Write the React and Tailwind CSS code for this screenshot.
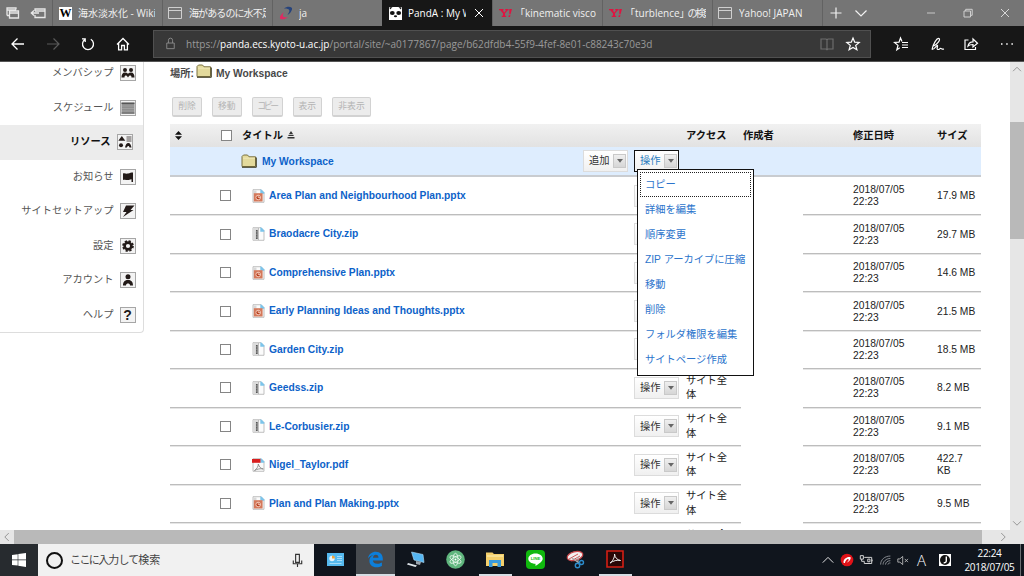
import React from "react";

const FILES = [
  ["Area Plan and Neighbourhood Plan.pptx", "pptx", "17.9 MB"],
  ["Braodacre City.zip", "zip", "29.7 MB"],
  ["Comprehensive Plan.pptx", "pptx", "14.6 MB"],
  ["Early Planning Ideas and Thoughts.pptx", "pptx", "21.5 MB"],
  ["Garden City.zip", "zip", "18.5 MB"],
  ["Geedss.zip", "zip", "8.2 MB"],
  ["Le-Corbusier.zip", "zip", "9.1 MB"],
  ["Nigel_Taylor.pdf", "pdf", "422.7 KB"],
  ["Plan and Plan Making.pptx", "pptx", "9.5 MB"],
  ["", "", ""],
];

const MENU = ["コピー", "詳細を編集", "順序変更", "ZIP アーカイブに圧縮", "移動", "削除", "フォルダ権限を編集", "サイトページ作成"];

const GRID = "grid grid-cols-[50px_22px_392.5px_51.5px_55px_61.5px_50.5px_84px_44px]";

function Line({ d, className = "", w = 1, size = 16 }) {
  return (
    <svg viewBox="0 0 16 16" width={size} height={size} className={`shrink-0 ${className}`} fill="none" stroke="currentColor" strokeWidth={w}>
      <path d={d} />
    </svg>
  );
}

function WindowIcon() {
  return <Line d="M1.500 2.500h13v11h-13zM1.500 5.500h13" className="text-[#cfcfcf]" />;
}

function Yahoo() {
  return (
    <svg width="14" height="12" viewBox="0 0 14 12" className="mr-[1px] ml-[1px] shrink-0" fill="#e01440">
      <path d="M1 2h4.500v1.200h-.8l1.600 2.300 1.800-2.300h-.9V2H10.500v1.200h-.8L7 6.400v2.400h1.200V10H3.800V8.800H5V6.400L2.300 3.200H1z" />
      <path d="M11.300 2H14l-1.500 5.200h-1.200zM10.800 8.300h1.700L12 10h-1.700z" />
    </svg>
  );
}

function Tab({ icon, label, active }) {
  return (
    <div className={`flex w-[110px] shrink-0 items-center pl-1 ${active ? "bg-[#171717] text-white" : "border-l border-[#626262] text-[#f0f0f0]"}`}>
      {icon}
      <span className={`ml-1.5 overflow-hidden leading-[20px] whitespace-nowrap ${active ? "w-[58px]" : "w-[77px]"}`}>{label}</span>
      {active && <Line d="M4 4l8 8M12 4l-8 8" className="ml-[5px]" size={16} />}
    </div>
  );
}

function TabBar() {
  return (
    <div className="flex h-[26px] bg-[#757575] font-['Open_Sans','Noto_Sans_CJK_JP',sans-serif] text-[10px] leading-none">
      <div className="flex w-[52px] items-center gap-[9px] pl-[5px] text-[#e8e8e8]">
        <Line d="M2 10.500V3h9v1.500M2 5h9M4.500 13V6h9v7zM4.500 8h9M2 10.500h2" w={1.3} />
        <Line d="M5 6V4h10v8.500H5V10M5 6h10M1 8h8M4 5.500L1.300 8 4 10.500" w={1.3} />
      </div>
      <Tab
        icon={<span className="ml-[2px] flex h-[13px] w-[13px] shrink-0 items-center justify-center bg-white font-['Liberation_Serif',serif] text-[12px] font-bold text-black">W</span>}
        label="海水淡水化 - Wiki"
      />
      <Tab icon={<WindowIcon />} label={<span className="tracking-[-0.9px]">海があるのに水不足</span>} />
      <Tab
        icon={
          <svg width="16" height="16" viewBox="0 0 16 16" fill="none" className="-mr-[1px] ml-[1px] shrink-0">
            <path d="M6 3.500C9 .8 15 1.200 14 4.500c-.5 2-2.500 4.500-4.500 5.500 2.500-4 3.500-6.500-3.500-6.500z" fill="#26437c" />
            <path d="M10 12.300c-3 2.500-9 3-8-.3.500-2 2.500-4 4-5C4 10 4 13 10 12.300z" fill="#e02a62" />
          </svg>
        }
        label="ja"
      />
      <Tab
        active
        icon={
          <svg width="13" height="13" viewBox="0 0 13 13" className="ml-[3px] shrink-0">
            <path d="M0 0h13v13H0z" fill="#fff" />
            <path d="M.5.300h3L1 2.500zM9.500.300h3L12 2.500z" fill="#111" />
            <ellipse cx="3.300" cy="6" rx="2.400" ry="2.100" fill="#111" />
            <ellipse cx="9.700" cy="6" rx="2.400" ry="2.100" fill="#111" />
            <ellipse cx="6.500" cy="9.300" rx="1.600" ry="1" fill="#111" />
          </svg>
        }
        label="PandA : My Workspace"
      />
      <Tab icon={<Yahoo />} label={<span className="-ml-[4px]">「kinematic viscosity</span>} />
      <Tab icon={<Yahoo />} label={<span className="-ml-[4px]">「turblence<span className="tracking-[-2px]">」の検索</span></span>} />
      <Tab icon={<WindowIcon />} label="Yahoo! JAPAN" />
      <div className="flex flex-1 items-center border-l border-[#626262] text-[#f2f2f2]">
        <Line d="M2.500 8h11M8 2.500v11" className="ml-[5px]" w={1.2} />
        <Line d="M2.500 5.500L8 11l5.500-5.500" className="ml-[9px]" w={1.2} />
        <Line d="M4 8h8" className="ml-[54px] text-[#c8c8c8]" />
        <Line d="M4 6h6.500v6H4zM5.700 6V4.300h6.500v6h-1.700" className="ml-[21px] text-[#d0d0d0]" />
        <Line d="M4 4l8 8M12 4l-8 8" className="ml-[21px] text-[#d8d8d8]" />
      </div>
    </div>
  );
}

function AddressBar() {
  return (
    <div className="flex h-9 items-center border-b border-[#555] bg-[#171717] font-['Open_Sans',sans-serif] text-white">
      <Line d="M2 8h12M7.500 2.500L2 8l5.500 5.500" className="ml-[10px]" w={1.3} />
      <Line d="M2 8h12M8.500 2.500L14 8l-5.500 5.500" className="ml-[19px] text-[#5a5a5a]" w={1.2} />
      <Line d="M5.200 3.300a5.500 5.500 0 1 0 5.600 0M5.200 6V2.800H2" className="ml-[19px]" w={1.3} />
      <Line d="M2 8.500L8 2.500l6 6M3.600 7v6.800h3V9.500h2.800v4.300h3V7" className="ml-[19px]" w={1.3} />
      <div className="ml-[22px] flex h-7 w-[718px] items-center border border-[#505050] bg-[#383838]">
        <Line d="M4 7.500h8v6H4zM5.800 7.500V4.500a2.200 2.200 0 0 1 4.400 0v3" className="ml-[9px] text-[#8a8a8a]" size={15} />
        <span className="ml-[8px] w-[628px] text-[10px] leading-none whitespace-nowrap text-[#9a9a9a]">
          https://<span className="text-white">panda.ecs.kyoto-u.ac.jp</span>/portal/site/~a0177867/page/b62dfdb4-55f9-4fef-8e01-c88243c70e3d
        </span>
        <Line d="M2 3h5l1 .8L9 3h5v10H9l-1 .8L7 13H2zM8 4v9.500" className="ml-[5px] text-[#6c6c6c]" w={1.2} />
        <Line d="M8 2l1.700 4.200 4.500.3-3.500 2.900 1.200 4.400L8 11.400l-3.900 2.400 1.200-4.400L1.800 6.500l4.500-.3z" className="ml-[10px]" w={1.2} />
      </div>
      <Line d="M9 5.500L7.500 2 6 6.200l-4.500.3L5 9.400l-1.200 4.400 3-2M9 6.500h6M9 9h6M9 11.500h6" className="ml-[22px]" w={1.2} />
      <Line d="M3 13.500C4 8 8 1.500 10 2.500s-2 6-5.500 7.500M3 13.500c2 .5 5-5 5.500-4s-1.500 4 .5 4 1.500-1.500 3-1 1 1 3 .5" className="ml-[20px]" w={1.2} />
      <Line d="M5.500 4H2v9.500h10.500V11M5 10c.5-3 2.500-4.200 5-4.200V3l4.500 4.200L10 11V8.500c-2 0-3.500 0-5 1.500z" className="ml-[18px]" w={1.2} />
      <Line d="M2 8h1.500M7.200 8h1.500M12.400 8h1.500" className="ml-[20px]" w={1.5} />
    </div>
  );
}

const GLYPHS = {
  people: (
    <g>
      <circle cx="5" cy="5.500" r="2" />
      <circle cx="11" cy="5.500" r="2" />
      <path d="M1.500 13c0-3 1-5 3.500-5s3 1.500 3 1.500S8.500 8 11 8s3.500 2 3.500 5h-3c0-2-1-2-1.500-2s-1 .5-2 2c-1-1.500-1.500-2-2-2s-1.500 0-1.500 2z" />
    </g>
  ),
  calendar: (
    <g>
      <path d="M1.500 3.500h13v10.500h-13z" fill="#8e8e8e" />
      <path d="M1.500 3h13v1.300h-13zM1.500 13.200h13v.8h-13z" fill="#444" />
      <path d="M2 6.500h12M2 9h12M2 11.500h12" stroke="#aeaeae" strokeWidth=".6" />
    </g>
  ),
  resources: (
    <g>
      <path d="M4.800 2.500l3.500 4.700h-7z" />
      <circle cx="4" cy="11.800" r="2" />
      <path d="M9.500 3h5v1h-5zM9.500 5h5v1h-5zM9.500 7h5v1h-5z" opacity=".75" />
      <path d="M8 14c.5-2.500 1.500-4.500 3.300-4.500S14 11.500 14.500 14h-2c-.3-1-.6-1.500-1.200-1.500S10.300 13 10 14z" />
    </g>
  ),
  flag: <path d="M3 5c2-.5 3 .5 5 0s3-1 5-1v9.500h-1.500V10.800c-2 0-2 .8-4 .8S5 11 3 11.500z" />,
  bolt: <path d="M6 3h8.500L10.500 7.500h3L3 14.500 6.500 9.500H3z" />,
  gear: (
    <g>
      <circle cx="8" cy="8.500" r="3.400" fill="none" stroke="#221a18" strokeWidth="2.600" />
      <circle cx="8" cy="8.500" r="5" fill="none" stroke="#221a18" strokeWidth="1.700" strokeDasharray="2.300 1.627" />
    </g>
  ),
  person: (
    <g>
      <circle cx="8" cy="5.300" r="2.500" />
      <path d="M3 14c0-3 1-5.500 5-5.500s5 2.500 5 5.500h-3c0-1.500-1-2-2-2s-2 .5-2 2z" />
    </g>
  ),
};

function SideIcon({ name }) {
  return (
    <span className="flex h-4 w-4 shrink-0 items-center justify-center border border-[#a6a6a6] bg-[#f3f3f3] text-[#221a18]">
      {name === "help" ? (
        <b className="font-['Liberation_Sans',sans-serif] text-[14px] leading-none">?</b>
      ) : (
        <svg viewBox="1 1.500 14 14" width="14" height="14" fill="#221a18">{GLYPHS[name]}</svg>
      )}
    </span>
  );
}

function Sidebar() {
  const items = [
    ["メンバシップ", "people"],
    ["スケジュール", "calendar"],
    ["リソース", "resources"],
    ["お知らせ", "flag"],
    ["サイトセットアップ", "bolt"],
    ["設定", "gear"],
    ["アカウント", "person"],
    ["ヘルプ", "help"],
  ];
  return (
    <div className="h-[271px] w-36 shrink-0 overflow-hidden rounded-br border-r border-b border-[#ddd] bg-white">
      <div className="-mt-[6px]">
        {items.map(([t, i], k) => (
          <div
            key={t}
            className={`flex h-[34.5px] items-center justify-end gap-[6px] text-[10.25px] ${k === 2 ? "bg-[#ececec] pr-[10.500px] font-bold text-[#111]" : "pr-[7.500px] text-[#555]"}`}
          >
            <span className="-mt-[1px]">{t}</span>
            <SideIcon name={i} />
          </div>
        ))}
      </div>
    </div>
  );
}

function Folder() {
  return (
    <svg viewBox="0 0 16 14" width="16" height="14" className="shrink-0">
      <path d="M1 12.500V2.500L2.500 1h4L8 2.800h6.500V12.500z" fill="#e3da9c" stroke="#7a7140" strokeWidth="1" />
      <path d="M1 13.300h14.300V3.500" fill="none" stroke="#3e3b22" strokeWidth="1" />
      <path d="M2 4.200h12" stroke="#f3ecc0" strokeWidth=".8" />
    </svg>
  );
}

function FileIcon({ type }) {
  return (
    <svg viewBox="0 0 13 14" width="13" height="14" className="shrink-0">
      <path d="M1 .7h8l3 3v9.600H1z" fill="#fbfbfb" stroke="#b0b0b0" strokeWidth=".8" />
      <path d="M8.300.5h1.200L12.300 3.500v1.300h-4z" fill="#7cc4ea" />
      {type === "pptx" && (
        <g>
          <path d="M1.500 1.500h3v3h-3z" fill="#d8d8d8" />
          <path d="M1.800 4.200h8.800v8.300H1.800z" fill="#d4785a" />
          <circle cx="6.200" cy="8.500" r="2.300" fill="#b8401f" stroke="#f6d3c4" strokeWidth=".9" />
          <path d="M6.200 6.200v2.300h2.300" stroke="#f6d3c4" strokeWidth=".8" fill="none" />
        </g>
      )}
      {type === "zip" && (
        <g>
          <path d="M1.200 1h4.800v12.200H1.200z" fill="#dcdcdc" />
          <path d="M4.800 3v9" stroke="#555" strokeWidth="1.700" />
          <path d="M4.800 4v7" stroke="#ccc" strokeWidth=".7" strokeDasharray=".8 .8" />
          <path d="M6.500 1v12" stroke="#999" strokeWidth=".6" />
        </g>
      )}
      {type === "pdf" && (
        <g>
          <path d="M0 1h8.500v3.800H0z" fill="#d91f1f" />
          <path d="M2.500 12.500C5 11 6.500 8 6.300 6c.7 3 2.500 4.500 5 5-3-.7-6 0-8.800 1.500z" fill="none" stroke="#888" strokeWidth=".9" />
        </g>
      )}
    </svg>
  );
}

function Check() {
  return <span className="h-[11px] w-[11px] shrink-0 border border-[#858585] bg-white" />;
}

function DropButton({ label, open }) {
  return (
    <span
      className={`flex h-[22px] w-[45px] shrink-0 items-center justify-between border bg-linear-to-b from-white to-[#f0f0f0] pr-px pl-[5px] ${open ? "border-[#111] text-[#2a7cc0]" : "border-[#dcdcdc] text-[#333]"}`}
    >
      <span className="whitespace-nowrap">{label}</span>
      <span className="flex h-[14px] w-[13px] items-center justify-center border border-[#c9c9c9] bg-linear-to-b from-[#efefef] to-[#d6d6d6]">
        <svg width="6" height="4" viewBox="0 0 6 4"><path d="M0 0h6L3 3.800z" fill="#666" /></svg>
      </span>
    </span>
  );
}

function ToolButton({ children, className }) {
  return (
    <span className={`flex h-5 items-center justify-center rounded-[2px] border border-b-2 border-[#d2d2d2] bg-[#ececec] text-[8.8px] whitespace-nowrap text-[#b4b4b4] ${className}`}>
      {children}
    </span>
  );
}

function Resources() {
  const cell = "flex items-center border-b border-[#bdbdbd] shadow-[0_1px_0_#e6e6e6]";
  return (
    <div className="ml-[26px] w-[811px] shrink-0 text-[10.27px] text-[#222]">
      <div className="flex h-[23px] items-center font-bold text-[#484848]">
        <span className="whitespace-nowrap">場所:</span>
        <span className="-mt-[5px] ml-[2px]"><Folder /></span>
        <span className="ml-[4px]">My Workspace</span>
      </div>
      <div className="mt-[12px] flex gap-[10px] pl-[2px]">
        <ToolButton className="w-[30px]">削除</ToolButton>
        <ToolButton className="w-[29.500px]">移動</ToolButton>
        <ToolButton className="w-[31px] tracking-[-2.300px]">コピー</ToolButton>
        <ToolButton className="w-[29.500px]">表示</ToolButton>
        <ToolButton className="w-[39px]">非表示</ToolButton>
      </div>
      <div className={`mt-[7px] h-[23px] items-center bg-linear-to-b from-[#f1f1f1] to-[#e2e2e2] font-bold whitespace-nowrap text-[#111] ${GRID}`}>
        <svg width="7" height="9" viewBox="0 0 7 9" className="ml-[5px]"><path d="M3.500 0L7 3.800H0zM3.500 9L0 5.200h7z" fill="#111" /></svg>
        <span className="flex pl-px"><Check /></span>
        <span className="flex items-center gap-[4px]">
          タイトル
          <svg width="8" height="8" viewBox="0 0 8 8"><path d="M4 0l2 3H2zM1.800 3.800h4.400l.7 1.200H1.100zM.5 6h7v1.500h-7z" fill="#333" /></svg>
        </span>
        <span />
        <span>アクセス</span>
        <span className="pl-[2px]">作成者</span>
        <span />
        <span>修正日時</span>
        <span>サイズ</span>
      </div>
      <div className={`h-[30px] items-center border-b-2 border-[#c9ccd0] bg-[#deedfe] ${GRID}`}>
        <span />
        <span />
        <span className="flex items-center font-bold text-[#0d62c9]">
          <span className="-ml-px"><Folder /></span>
          <span className="mt-px ml-[5px] flex-1">My Workspace</span>
          <span className="mr-[6.500px] font-normal"><DropButton label="追加" /></span>
        </span>
        <div className="relative -ml-[0.5px] flex">
          <DropButton label="操作" open />
          <div className="absolute top-[19px] left-[3px] z-10 h-[207px] w-[117px] border border-[#111] bg-white p-[2px] text-[#2c74cc]">
            {MENU.map((m, i) => (
              <div
                key={m}
                className={`flex h-[25px] items-center border border-dotted pl-[4px] whitespace-nowrap ${i === 0 ? "border-[#222]" : "border-transparent"}`}
              >
                {m}
              </div>
            ))}
          </div>
        </div>
      </div>
      {FILES.map(([name, type, size], i) => (
        <div key={i} className={`h-[38.45px] ${GRID}`}>
          <span className={cell} />
          <span className={cell}><Check /></span>
          <span className={`${cell} pl-[9.500px] font-bold text-[#0d62c9]`}>
            {type && <FileIcon type={type} />}
            <span className="ml-[4.500px]">{name}</span>
          </span>
          <span className={cell}><span className="-ml-[0.5px]"><DropButton label={i < 5 ? "" : "操作"} /></span></span>
          <span className={`${cell} pt-px pr-[12px] leading-[14.500px]`}>{i < 5 ? "" : "サイト全体"}</span>
          <span />
          <span className={cell} />
          <span className={`${cell} pt-px pr-[30px] leading-[12px]`}>{type && "2018/07/05 22:23"}</span>
          <span className={`${cell} pt-px leading-[12px]`}><span className="w-[40px]">{size}</span></span>
        </div>
      ))}
    </div>
  );
}

function Scrollbar() {
  return (
    <div className="flex w-[14px] shrink-0 flex-col items-center bg-[#e6e6e6] text-[#8a8a8a]">
      <Line d="M3.500 10.500L8 6l4.500 4.500" size={14} />
      <div className="mt-[46px] h-[117px] w-full bg-[#b9b9b9]" />
      <Line d="M3.500 6L8 10.500 12.500 6" className="mt-auto" size={14} />
    </div>
  );
}

function Task({ children, active, open, className = "w-[40px]" }) {
  return (
    <span className={`flex h-8 shrink-0 flex-col items-center ${className} ${active ? "bg-[#474b50]" : ""}`}>
      <span className="flex h-[30px] items-center justify-center">{children}</span>
      {(active || open) && <span className={`h-[2px] bg-[#d5dde4] ${active ? "w-full" : "w-[33px]"}`} />}
    </span>
  );
}

function Taskbar() {
  return (
    <div className="flex h-8 bg-[#10151d] text-white">
      <div className="flex w-[38px] items-center justify-center bg-[#272b2f]">
        <svg width="14" height="14" viewBox="0 0 14 14" fill="#fff"><path d="M0 2l5.700-.8v5.400H0zM6.300 1.100L14 0v6.600H6.300zM0 7.200h5.700v5.400L0 11.900zM6.300 7.200H14v6.700l-7.700-1.100z" /></svg>
      </div>
      <div className="flex w-[276px] items-center bg-[#f1f1f1]">
        <span className="ml-[8px] h-[17px] w-[17px] rounded-full border-[2.500px] border-[#111]" />
        <span className="ml-[7px] flex-1 text-[11px] tracking-[-1.600px] whitespace-nowrap text-[#444]">ここに<span className="tracking-[-0.9px]">入力して</span><span className="tracking-normal">検索</span></span>
        <Line d="M6 1.500h4v8.500H6zM3.500 8v3.500h9V8M8 11.500V15" className="mr-[9px] text-[#333]" size={15} w={1.200} />
      </div>
      <Task className="w-[42px]">
        <svg width="17" height="13" viewBox="0 0 17 13">
          <path d="M0 0h17v13H0z" fill="#55b9ee" />
          <circle cx="5" cy="5.500" r="2.700" fill="#e6f5fc" /><path d="M5 5.500V2.500a3 3 0 0 1 3 3z" fill="#f2a33a" />
          <path d="M10 3.500h5M10 5.500h5M10 7.500h5M2.500 10.500h12" stroke="#a5dcf8" strokeWidth="1" />
        </svg>
      </Task>
      <Task active className="w-[39px]">
        <svg width="17" height="17" viewBox="0 0 17 17">
          <path d="M1 7.500C1.800 3 5 .8 8.800.8c4.500 0 7 3.200 7 7v1.700H5.900c.2 2.300 2 3.300 4.300 3.300 1.800 0 3.200-.5 4.700-1.300v3.400c-1.600.9-3.500 1.300-5.400 1.300-4.300 0-7.100-2.600-7.100-6.500 0-2.800 1.500-4.800 4-5.800C4 4.300 2.200 5.400 1 7.500zM6 6.700h5.500c0-1.900-.9-2.900-2.600-2.900C7.200 3.800 6.200 5 6 6.700z" fill="#0c7fdb" />
        </svg>
      </Task>
      <Task className="w-[41px]">
        <svg width="18" height="17" viewBox="0 0 18 17">
          <path d="M4.500 1L16 3.500l1 8L7 9z" fill="#55b6f2" stroke="#b5ddf5" strokeWidth=".6" />
          <path d="M9 10l5 1-1 3-4-1z" fill="#9aa4ad" />
          <path d="M1 12l9 2.500L8.500 16 0 13.500z" fill="#dfe5ea" />
        </svg>
      </Task>
      <Task className="w-[39px]">
        <svg width="19" height="19" viewBox="0 0 19 19" fill="none" stroke="#eefaf2" strokeWidth=".8">
          <circle cx="9.500" cy="9.500" r="9.300" fill="#5fb57d" stroke="none" />
          <ellipse cx="9.500" cy="9.500" rx="2.500" ry="6.200" />
          <ellipse cx="9.500" cy="9.500" rx="2.500" ry="6.200" transform="rotate(60 9.500 9.500)" />
          <ellipse cx="9.500" cy="9.500" rx="2.500" ry="6.200" transform="rotate(120 9.500 9.500)" />
          <circle cx="9.500" cy="9.500" r="1" fill="#fff" stroke="none" />
        </svg>
      </Task>
      <Task open>
        <svg width="18" height="15" viewBox="0 0 18 15">
          <path d="M0 .5h6.500L8 2h10v12H0z" fill="#f4cf6b" /><path d="M1 3.500h16v1H1z" fill="#fdf0bb" />
          <path d="M3 15V8h12v7h-3.500v-4h-5v4z" fill="#3b9bdc" />
        </svg>
      </Task>
      <Task>
        <svg width="19" height="19" viewBox="0 0 19 19">
          <rect width="19" height="19" rx="4" fill="#10b90e" />
          <path d="M9.500 3.500c4.200 0 7.200 2.300 7.200 5.300S12.500 14 9.500 16v-2.200c-4.200 0-7.200-2.200-7.200-5s3-5.300 7.200-5.300z" fill="#fff" />
          <text x="9.500" y="10.300" textAnchor="middle" fontSize="4.200" fontWeight="bold" fill="#10b90e">LINE</text>
        </svg>
      </Task>
      <Task>
        <svg width="19" height="19" viewBox="0 0 19 19" fill="none">
          <ellipse cx="9" cy="6" rx="8" ry="4.300" fill="#f3f0f0" stroke="#c8474a" strokeWidth="1.200" transform="rotate(-15 9 6)" />
          <path d="M3 9l9-5M5 11l9-5" stroke="#c8474a" strokeWidth=".9" />
          <path d="M6 8l7 5M12 7v6" stroke="#aaa" strokeWidth="1.200" />
          <circle cx="11.500" cy="15.500" r="2.200" stroke="#2c8ccc" strokeWidth="1.400" /><circle cx="15.500" cy="12.500" r="2" stroke="#2c8ccc" strokeWidth="1.400" />
        </svg>
      </Task>
      <Task open>
        <svg width="18" height="18" viewBox="0 0 18 18" fill="none">
          <path d="M1 1h16v16H1z" fill="#2a0707" stroke="#d41f14" strokeWidth="1.600" />
          <path d="M4 13c2-1 5-5.500 4.500-9 .5 4 3 6 6 6.500-3.500-.8-7 .2-10.500 2.500z" stroke="#f4f4f4" strokeWidth="1" />
        </svg>
      </Task>
      <div className="ml-auto flex items-center">
        <Line d="M2 11l6-6 6 6" size={14} />
        <svg width="14" height="14" viewBox="0 0 14 14" className="ml-[5px]">
          <circle cx="7" cy="7" r="6.300" fill="#e01218" />
          <path d="M3.500 8.500C4 5 8 3.500 10 4s-.5 5-3.500 5.500C9 8 9 6 8 6S5 8.500 5 10c-1 .3-1.700-.3-1.500-1.500z" fill="#fff" />
        </svg>
        <Line d="M1.500 3v4h3.500V3zM3 7v2.500h3M6 5h8.500v7H6V9.500M15 7.500v2M10 7v3h2.500V7z" className="ml-[5px] text-[#d8d8d8]" size={14} w={1.1} />
        <Line d="M2 13C2 7 7 2.500 14 2.500M5 13c0-4 4-7.500 9-7.500M8 13c0-3 3-4.800 6-4.800M11 13c0-1.500 1.500-2 3-2" className="ml-[6px] text-[#9ca0a5]" size={13} />
        <Line d="M1 6v4h2.500L7 13V3L3.500 6zM9.500 6l4 4M13.500 6l-4 4" className="ml-[5px] text-[#c8c8c8]" size={13} />
        <span className="ml-[7px] w-[10px] font-['Open_Sans',sans-serif] text-[15px] leading-none font-light">A</span>
        <svg width="12" height="12" viewBox="0 0 12 12" className="ml-[12px]" fill="none">
          <path d="M0 0h12v12H0z" fill="#fff" />
          <circle cx="6" cy="6" r="5" fill="#111" />
          <path d="M7.300 2.500v4.300c0 1.300-.7 2-2.600 1.900" stroke="#fff" strokeWidth="1.400" />
        </svg>
        <div className="ml-[13px] w-[51px] text-center font-['Open_Sans',sans-serif] text-[10px] leading-[14px] tracking-[-0.300px] whitespace-nowrap">
          22:24<br />2018/07/05
        </div>
        <span className="mr-[3px] ml-[5px] h-8 w-px bg-[#6a6e72]" />
      </div>
    </div>
  );
}

export default function App() {
  return (
    <div className="flex h-[576px] w-[1024px] flex-col overflow-hidden bg-white font-['Liberation_Sans','Noto_Sans_CJK_JP',sans-serif]">
      <TabBar />
      <AddressBar />
      <div className="flex h-[468px] shrink-0 overflow-hidden">
        <Sidebar />
        <Resources />
        <div className="ml-auto flex"><Scrollbar /></div>
      </div>
      <div className="flex h-[14px] shrink-0 items-center bg-[#e6e6e6] text-[#8a8a8a]">
        <Line d="M10 3.500L5.500 8 10 12.500" size={14} />
        <div className="h-full w-[968px] bg-[#b9b9b9]" />
        <Line d="M6 3.500L10.500 8 6 12.500" className="ml-[14px]" size={14} />
      </div>
      <Taskbar />
    </div>
  );
}
